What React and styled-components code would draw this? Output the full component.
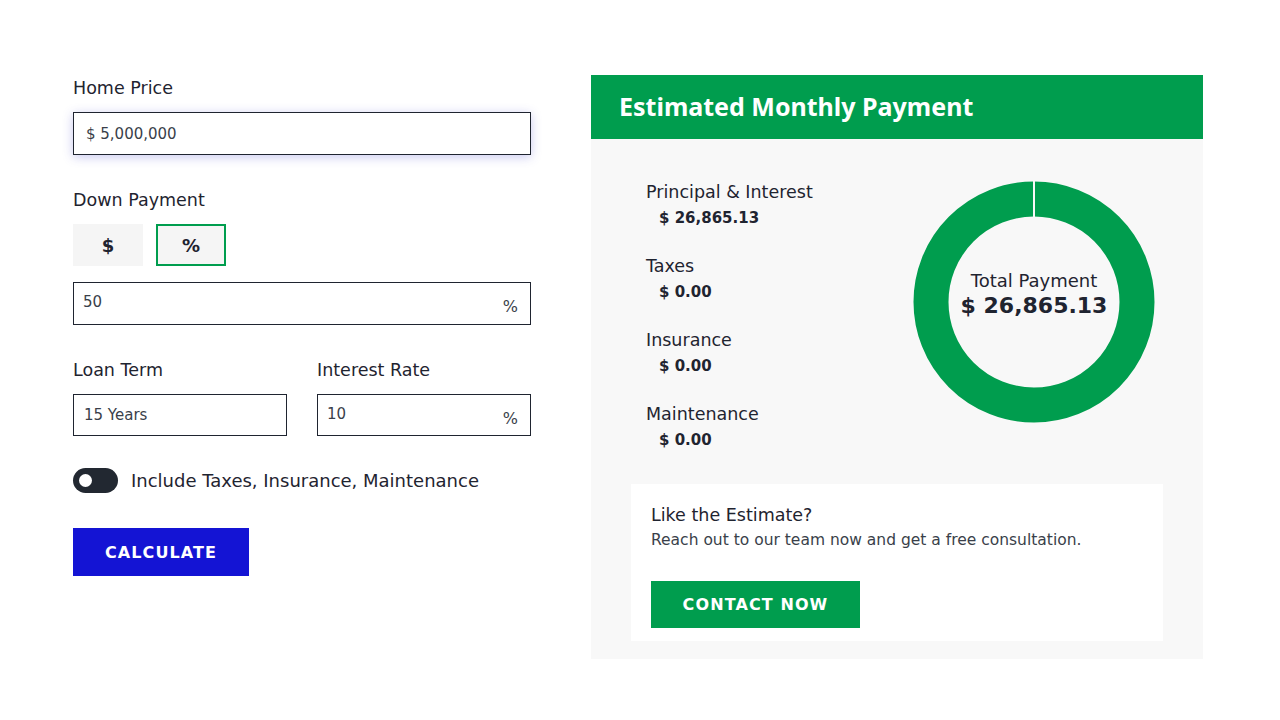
import React from "react";
import styled, { createGlobalStyle } from "styled-components";

const Global = createGlobalStyle`
  html, body { margin: 0; padding: 0; background: #fff; }
  body { font-family: "DejaVu Sans", "Open Sans", sans-serif; color: #1f2430; }
  * { box-sizing: border-box; }
`;

const Page = styled.div`
  display: flex;
  align-items: flex-start;
  gap: 60px;
  padding: 75px 0 0 73px;
  width: 1280px;
  height: 720px;
`;

const Form = styled.div`
  width: 458px;
  display: flex;
  flex-direction: column;
  padding-top: 2px;
`;

const Label = styled.div`
  font-size: 17.5px;
  line-height: 22px;
  color: #1f2430;
  margin-bottom: 13px;
`;

const Field = styled.div`
  display: flex;
  flex-direction: column;
  margin-bottom: ${(p) => p.$mb || 0}px;
  flex: 1;
`;

const InputBox = styled.div`
  height: ${(p) => p.$h || 42}px;
  border: 1px solid #1f2430;
  background: #fff;
  display: flex;
  align-items: ${(p) => (p.$center ? "center" : "flex-start")};
  justify-content: space-between;
  padding: ${(p) => (p.$center ? `0 ${p.$pl || 10}px` : "10px 12px 0 9px")};
  font-size: 15px;
  color: #3a3f4a;
  box-shadow: ${(p) => (p.$focus ? "0 2px 10px rgba(60,60,200,0.28)" : "none")};
`;

const Suffix = styled.span`
  font-size: 16px;
  color: #3a3f4a;
  margin-top: 4px;
`;

const ModeRow = styled.div`
  display: flex;
  gap: 13px;
  margin-bottom: 16px;
`;

const ModeBtn = styled.div`
  width: 70px;
  height: 42px;
  background: #f5f5f5;
  border: 2px solid ${(p) => (p.$active ? "#009d4e" : "#f5f5f5")};
  display: flex;
  align-items: center;
  justify-content: center;
  font-weight: bold;
  font-size: 18px;
  color: #1f2430;
`;

const TwoCol = styled.div`
  display: flex;
  gap: 30px;
  margin-bottom: 32px;
`;

const ToggleRow = styled.div`
  display: flex;
  align-items: center;
  gap: 13px;
  margin-bottom: 35px;
`;

const Switch = styled.div`
  width: 45px;
  height: 25px;
  border-radius: 13px;
  background: #222831;
  position: relative;
  &::after {
    content: "";
    position: absolute;
    left: 6px;
    top: 6px;
    width: 13px;
    height: 13px;
    border-radius: 50%;
    background: #fff;
  }
`;

const ToggleText = styled.span`
  font-size: 18px;
  color: #1f2430;
`;

const Button = styled.div`
  width: ${(p) => p.$w}px;
  height: ${(p) => p.$h}px;
  background: ${(p) => p.$bg};
  color: #fff;
  font-weight: bold;
  font-size: 16px;
  letter-spacing: 1.1px;
  display: flex;
  align-items: center;
  justify-content: center;
`;

const Panel = styled.div`
  width: 612px;
  background: #f8f8f8;
  display: flex;
  flex-direction: column;
`;

const PanelHead = styled.div`
  height: 64px;
  background: #009d4e;
  color: #fff;
  font-family: "Noto Sans", sans-serif;
  font-weight: bold;
  font-size: 25px;
  display: flex;
  align-items: center;
  padding-left: 28px;
  padding-bottom: 2px;
`;

const PanelBody = styled.div`
  padding: 42px 40px 18px 40px;
  display: flex;
  flex-direction: column;
`;

const Summary = styled.div`
  display: flex;
  justify-content: space-between;
  align-items: flex-start;
  padding: 0 8px 0 15px;
  margin-bottom: 33px;
`;

const Items = styled.div`
  display: flex;
  flex-direction: column;
  gap: 26px;
`;

const Item = styled.div`
  display: flex;
  flex-direction: column;
  gap: 4px;
`;

const ItemLabel = styled.div`
  font-size: 17.5px;
  line-height: 22px;
`;

const ItemValue = styled.div`
  font-size: 15px;
  line-height: 22px;
  font-weight: bold;
  padding-left: 13px;
`;

const Donut = styled.div`
  position: relative;
  width: 242px;
  height: 242px;
`;

const DonutCenter = styled.div`
  position: absolute;
  inset: 0;
  display: flex;
  flex-direction: column;
  align-items: center;
  justify-content: center;
  gap: 2px;
  padding-bottom: 16px;
`;

const CenterLabel = styled.div`
  font-size: 18px;
`;

const CenterValue = styled.div`
  font-size: 22px;
  font-weight: bold;
`;

const Card = styled.div`
  background: #fff;
  padding: 20px 20px 13px 20px;
  display: flex;
  flex-direction: column;
`;

const CardTitle = styled.div`
  font-size: 17.5px;
  line-height: 22px;
  margin-bottom: 4px;
`;

const CardText = styled.div`
  font-size: 15.5px;
  line-height: 20px;
  color: #3a3f4a;
  margin-bottom: 31px;
`;

export default function App() {
  const r = 103;
  return (
    <>
      <Global />
      <Page>
        <Form>
          <Field $mb={34}>
            <Label>Home Price</Label>
            <InputBox $h={43} $center $pl={12} $focus>$ 5,000,000</InputBox>
          </Field>
          <Field $mb={34}>
            <Label>Down Payment</Label>
            <ModeRow>
              <ModeBtn>$</ModeBtn>
              <ModeBtn $active>%</ModeBtn>
            </ModeRow>
            <InputBox $h={43}>
              <span>50</span>
              <Suffix>%</Suffix>
            </InputBox>
          </Field>
          <TwoCol>
            <Field>
              <Label>Loan Term</Label>
              <InputBox $center>15 Years</InputBox>
            </Field>
            <Field>
              <Label>Interest Rate</Label>
              <InputBox>
                <span>10</span>
                <Suffix>%</Suffix>
              </InputBox>
            </Field>
          </TwoCol>
          <ToggleRow>
            <Switch />
            <ToggleText>Include Taxes, Insurance, Maintenance</ToggleText>
          </ToggleRow>
          <Button $w={176} $h={48} $bg="#1414d4">CALCULATE</Button>
        </Form>
        <Panel>
          <PanelHead>Estimated Monthly Payment</PanelHead>
          <PanelBody>
            <Summary>
              <Items>
                <Item>
                  <ItemLabel>Principal &amp; Interest</ItemLabel>
                  <ItemValue>$ 26,865.13</ItemValue>
                </Item>
                <Item>
                  <ItemLabel>Taxes</ItemLabel>
                  <ItemValue>$ 0.00</ItemValue>
                </Item>
                <Item>
                  <ItemLabel>Insurance</ItemLabel>
                  <ItemValue>$ 0.00</ItemValue>
                </Item>
                <Item>
                  <ItemLabel>Maintenance</ItemLabel>
                  <ItemValue>$ 0.00</ItemValue>
                </Item>
              </Items>
              <Donut>
                <svg width="242" height="242" viewBox="0 0 242 242">
                  <circle cx="121" cy="121" r={r} fill="none" stroke="#009d4e" strokeWidth="35" />
                  <line x1="121" y1="0" x2="121" y2="37" stroke="#f8f8f8" strokeWidth="2" />
                </svg>
                <DonutCenter>
                  <CenterLabel>Total Payment</CenterLabel>
                  <CenterValue>$ 26,865.13</CenterValue>
                </DonutCenter>
              </Donut>
            </Summary>
            <Card>
              <CardTitle>Like the Estimate?</CardTitle>
              <CardText>Reach out to our team now and get a free consultation.</CardText>
              <Button $w={209} $h={47} $bg="#009d4e">CONTACT NOW</Button>
            </Card>
          </PanelBody>
        </Panel>
      </Page>
    </>
  );
}
